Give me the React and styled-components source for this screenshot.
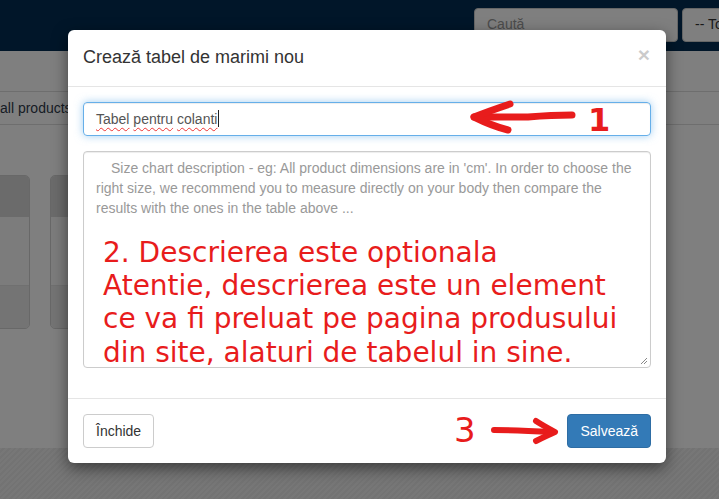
import React from "react";
import styled, { createGlobalStyle } from "styled-components";

const Global = createGlobalStyle`
  html, body { margin: 0; padding: 0; }
  body {
    width: 719px; height: 499px; overflow: hidden;
    font-family: "Liberation Sans", Arial, sans-serif;
    font-size: 14px; color: #333; background: #fff;
  }
  * { box-sizing: border-box; }
`;

const Page = styled.div`
  position: relative;
  width: 719px;
  height: 499px;
  overflow: hidden;
  display: flex;
  flex-direction: column;
  background: #fff;
`;

const Navbar = styled.div`
  height: 51px;
  flex: none;
  background: #022c52;
  display: flex;
  justify-content: flex-end;
  align-items: flex-start;
  gap: 4px;
  padding-top: 8px;
  margin-right: -60px;
`;

const NavInput = styled.div`
  width: 204px;
  height: 34px;
  background: #fff;
  border: 1px solid #ccc;
  border-radius: 4px;
  padding: 7px 12px;
  color: #999;
  font-size: 14px;
  font-family: "Liberation Sans", sans-serif;
`;

const NavSelect = styled(NavInput)`
  width: 97px;
  color: #333;
`;

const Content = styled.div`
  flex: 1;
  display: flex;
  flex-direction: column;
`;

const Toolbar = styled.div`
  margin-top: 40px;
  height: 34px;
  border-top: 1px solid #ddd;
  border-bottom: 1px solid #ddd;
  display: flex;
  align-items: center;
`;

const ToolButton = styled.div`
  padding-right: 14px;
  border-right: 1px solid #ccc;
  font-size: 14px;
  color: #2f3a4a;
  line-height: 32px;
`;

const Cards = styled.div`
  margin-top: 50px;
  display: flex;
  gap: 20px;
  margin-left: -170px;
`;

const Card = styled.div`
  width: 200px;
  height: 154px;
  border: 1px solid #d0d0d0;
  border-radius: 5px;
  overflow: hidden;
  display: flex;
  flex-direction: column;
  background: #f9f9f9;
`;

const CardHead = styled.div`
  height: 41px;
  background: #d6d6d6;
`;

const CardBody = styled.div`
  flex: 1;
`;

const CardFoot = styled.div`
  height: 43px;
  background: #e8e8e8;
  border-top: 1px solid #e0e0e0;
`;

const Stripes = styled.div`
  margin-top: auto;
  height: 51px;
  background: repeating-linear-gradient(
    135deg,
    #eeeeee 0px,
    #eeeeee 2px,
    #e6e6e6 2px,
    #e6e6e6 4px
  );
`;

const Backdrop = styled.div`
  position: absolute;
  inset: 0;
  background: rgba(0, 0, 0, 0.5);
`;

const Modal = styled.div`
  position: absolute;
  left: 68px;
  top: 30px;
  width: 598px;
  background: #fff;
  border-radius: 6px;
  box-shadow: 0 5px 15px rgba(0, 0, 0, 0.5);
  display: flex;
  flex-direction: column;
`;

const Header = styled.div`
  padding: 15px;
  border-bottom: 1px solid #e5e5e5;
  display: flex;
  align-items: center;
  justify-content: space-between;
`;

const Title = styled.h4`
  margin: 0;
  font-size: 18px;
  font-weight: 400;
  line-height: 25.7px;
  color: #333;
  font-family: "Liberation Sans", sans-serif;
`;

const Close = styled.span`
  font-size: 21px;
  font-weight: 700;
  line-height: 1;
  color: #000;
  opacity: 0.2;
  margin-right: 1px;
  margin-top: -7px;
`;

const Body = styled.div`
  padding: 15px;
  display: flex;
  flex-direction: column;
  gap: 15px;
  padding-bottom: 30px;
`;

const Field = styled.div`
  position: relative;
  height: 34px;
  border: 1px solid #66afe9;
  border-radius: 4px;
  padding: 6px 12px;
  line-height: 20px;
  color: #555;
  box-shadow: inset 0 1px 1px rgba(0, 0, 0, 0.075), 0 0 8px rgba(102, 175, 233, 0.6);
  display: flex;
  align-items: center;
`;

const Word = styled.span`
  text-decoration: ${(p) => (p.$misspelled ? "underline wavy #e33" : "none")};
  text-decoration-thickness: 1px;
  text-underline-offset: 3px;
  text-decoration-skip-ink: none;
  white-space: pre;
`;

const Caret = styled.span`
  display: inline-block;
  width: 1px;
  height: 17px;
  background: #222;
  margin-left: 1px;
`;

const Annot = styled.svg`
  position: absolute;
  overflow: visible;
`;

const Digit = styled.span`
  position: absolute;
  color: #e81c1c;
  font-family: "DejaVu Sans", sans-serif;
  font-weight: ${(p) => (p.$bold ? 700 : 400)};
  font-size: ${(p) => p.$size}px;
  line-height: 1;
`;

const TextArea = styled.div`
  position: relative;
  height: 217px;
  border: 1px solid #ccc;
  border-radius: 4px;
  padding: 6px 12px;
  overflow: hidden;
  box-shadow: inset 0 1px 1px rgba(0, 0, 0, 0.075);
`;

const Placeholder = styled.p`
  margin: 0;
  color: #999;
  font-size: 14px;
  line-height: 20px;
  text-indent: 15px;
`;

const Note = styled.p`
  margin: 18px 0 0 7px;
  color: #e81c1c;
  font-family: "DejaVu Sans", sans-serif;
  font-size: 28px;
  line-height: 33.3px;
  white-space: pre;
`;

const Grip = styled.svg`
  position: absolute;
  right: 2px;
  bottom: 2px;
`;

const Footer = styled.div`
  position: relative;
  padding: 15px;
  border-top: 1px solid #e5e5e5;
  display: flex;
  justify-content: space-between;
  align-items: center;
`;

const Button = styled.button`
  height: 34px;
  padding: 6px 12px;
  font-size: 14px;
  line-height: 20px;
  font-family: "Liberation Sans", sans-serif;
  border-radius: 4px;
  border: 1px solid ${(p) => (p.$primary ? "#2e6da4" : "#ccc")};
  background: ${(p) => (p.$primary ? "#337ab7" : "#fff")};
  color: ${(p) => (p.$primary ? "#fff" : "#333")};
`;

export default function App() {
  return (
    <>
      <Global />
      <Page>
        <Navbar>
          <NavInput>Caută</NavInput>
          <NavSelect>-- Toate</NavSelect>
        </Navbar>
        <Content>
          <Toolbar>
            <ToolButton>all products</ToolButton>
          </Toolbar>
          <Cards>
            {[0, 1].map((i) => (
              <Card key={i}>
                <CardHead />
                <CardBody />
                <CardFoot />
              </Card>
            ))}
          </Cards>
          <Stripes />
        </Content>
        <Backdrop />
        <Modal>
          <Header>
            <Title>Crează tabel de marimi nou</Title>
            <Close>×</Close>
          </Header>
          <Body>
            <Field>
              <Word $misspelled>Tabel</Word>
              <Word> </Word>
              <Word $misspelled>pentru</Word>
              <Word> </Word>
              <Word $misspelled>colanti</Word>
              <Caret />
              <Annot style={{ left: 386, top: -2 }} width="106" height="34" viewBox="0 0 106 34">
                <g fill="none" stroke="#e81c1c" strokeLinecap="round" strokeLinejoin="round">
                  <path d="M102 14 C85 14 70 15 58 16 C40 16 20 16 4 16" strokeWidth="7" />
                  <path d="M40 3 C28 7 14 12 4 16 C14 21 26 26 38 29" strokeWidth="7" />
                </g>
              </Annot>
              <Digit $bold $size={32} style={{ left: 504, top: 1 }}>1</Digit>
            </Field>
            <TextArea>
              <Placeholder>
                Size chart description - eg: All product dimensions are in 'cm'. In order to choose the right size, we recommend you to measure directly on your body then compare the results with the ones in the table above ...
              </Placeholder>
              <Note>
                {"2. Descrierea este optionala\nAtentie, descrierea este un element\nce va fi preluat pe pagina produsului\ndin site, alaturi de tabelul in sine."}
              </Note>
              <Grip width="8" height="8" viewBox="0 0 8 8">
                <path d="M7 1 L1 7 M7 4 L4 7" stroke="#888" strokeWidth="1" />
              </Grip>
            </TextArea>
          </Body>
          <Footer>
            <Button>Închide</Button>
            <Digit $size={34} style={{ left: 386, top: 14 }}>3</Digit>
            <Annot style={{ left: 422, top: 18 }} width="70" height="28" viewBox="0 0 70 28">
              <g fill="none" stroke="#e81c1c" strokeLinecap="round" strokeLinejoin="round">
                <path d="M4 13 C24 13 44 14 63 15" strokeWidth="6" />
                <path d="M46 4 C52 8 58 11 65 15 C58 18 52 21 46 24" strokeWidth="6" />
              </g>
            </Annot>
            <Button $primary>Salvează</Button>
          </Footer>
        </Modal>
      </Page>
    </>
  );
}
